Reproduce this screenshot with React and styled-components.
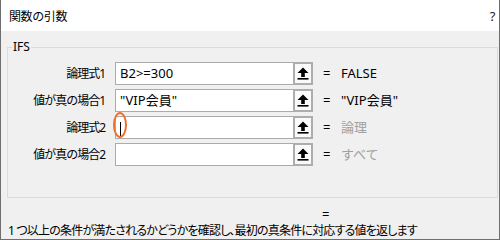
import React from "react";
import styled, { createGlobalStyle } from "styled-components";

const Global = createGlobalStyle`
  html, body { margin: 0; padding: 0; background: #fff; }
  body {
    font-family: "Noto Sans", "Noto Sans CJK JP", sans-serif;
  }
`;

const Window = styled.div`
  width: 500px;
  height: 240px;
  box-sizing: border-box;
  border: 1px solid #6e6e6e;
  border-top: none;
  background: #f0f0f0;
  display: flex;
  flex-direction: column;
  overflow: hidden;
`;

const TitleBar = styled.div`
  height: 31px;
  flex: none;
  background: #fff;
  display: flex;
  align-items: center;
  justify-content: space-between;
  padding: 0 4px 0 8px;
  font-size: 12px;
  letter-spacing: -0.4px;
  color: #000;
`;

const Help = styled.span`
  font-size: 13px;
  color: #222;
`;

const Group = styled.fieldset`
  margin: 8px 1px 0 6px;
  padding: 7px 0 31px 0;
  border: 1px solid #dcdcdc;
  min-width: 0;
`;

const Legend = styled.legend`
  margin-left: 4px;
  padding: 0 1px;
  font-size: 12px;
  line-height: 16px;
  color: #000;
`;

const Rows = styled.div`
  display: grid;
  grid-template-columns: 107px 178px 20px 28px 1fr;
  row-gap: 4px;
  align-items: center;
`;

const Label = styled.div`
  text-align: right;
  font-size: 12px;
  letter-spacing: -1px;
  line-height: 23px;
  color: #000;
  padding-right: 10px;
  white-space: nowrap;
`;

const Input = styled.div`
  position: relative;
  height: 23px;
  box-sizing: border-box;
  border: 1px solid #ababab;
  border-right: none;
  background: #fff;
  font-size: 13px;
  line-height: 21px;
  padding-left: 4px;
  color: #000;
  white-space: nowrap;
`;

const Caret = styled.span`
  display: inline-block;
  width: 1px;
  height: 14px;
  background: #000;
  vertical-align: middle;
`;

const Highlight = styled.span`
  position: absolute;
  left: -3px;
  top: -5px;
  width: 10px;
  height: 22px;
  border: 2.5px solid #ed7030;
  border-radius: 50%;
`;

const RefButton = styled.div`
  height: 23px;
  box-sizing: border-box;
  border: 2px solid #adadad;
  background: #fafafa;
  display: flex;
  align-items: center;
  justify-content: center;
`;

const Eq = styled.div`
  font-size: 13px;
  line-height: 23px;
  color: #000;
  padding-left: 10px;
`;

const Value = styled.div`
  font-size: 13px;
  line-height: 23px;
  color: ${(p) => (p.$hint ? "#a0a0a0" : "#000")};
  white-space: nowrap;
`;

const ResultLine = styled.div`
  margin-top: 8px;
  padding-left: 321px;
  font-size: 13px;
  line-height: 16px;
  color: #000;
`;

const Description = styled.div`
  margin-top: 1px;
  padding-left: 7px;
  font-size: 12px;
  font-feature-settings: "palt";
  letter-spacing: -0.8px;
  line-height: 16px;
  color: #000;
  white-space: nowrap;
`;

const UpArrow = () => (
  <svg width="12" height="13" viewBox="0 0 12 13">
    <polygon points="6,0.5 11.5,6 7.8,6 7.8,10 4.2,10 4.2,6 0.5,6" fill="#000" />
    <rect x="0.5" y="11" width="11" height="1.6" fill="#000" />
  </svg>
);

const rows = [
  { label: "論理式1", text: "B2>=300", value: "FALSE" },
  { label: "値が真の場合1", text: "\"VIP会員\"", value: "\"VIP会員\"" },
  { label: "論理式2", text: "", value: "論理", hint: true, focus: true },
  { label: "値が真の場合2", text: "", value: "すべて", hint: true },
];

export default function App() {
  return (
    <>
      <Global />
      <Window>
        <TitleBar>
          <span>関数の引数</span>
          <Help>?</Help>
        </TitleBar>
        <Group>
          <Legend>IFS</Legend>
          <Rows>
            {rows.map((r) => (
              <React.Fragment key={r.label}>
                <Label>{r.label}</Label>
                <Input>
                  {r.text}
                  {r.focus && <Caret />}
                  {r.focus && <Highlight />}
                </Input>
                <RefButton>
                  <UpArrow />
                </RefButton>
                <Eq>=</Eq>
                <Value $hint={r.hint}>{r.value}</Value>
              </React.Fragment>
            ))}
          </Rows>
        </Group>
        <ResultLine>=</ResultLine>
        <Description>
          1 つ以上の条件が満たされるかどうかを確認し、最初の真条件に対応する値を返します
        </Description>
      </Window>
    </>
  );
}
